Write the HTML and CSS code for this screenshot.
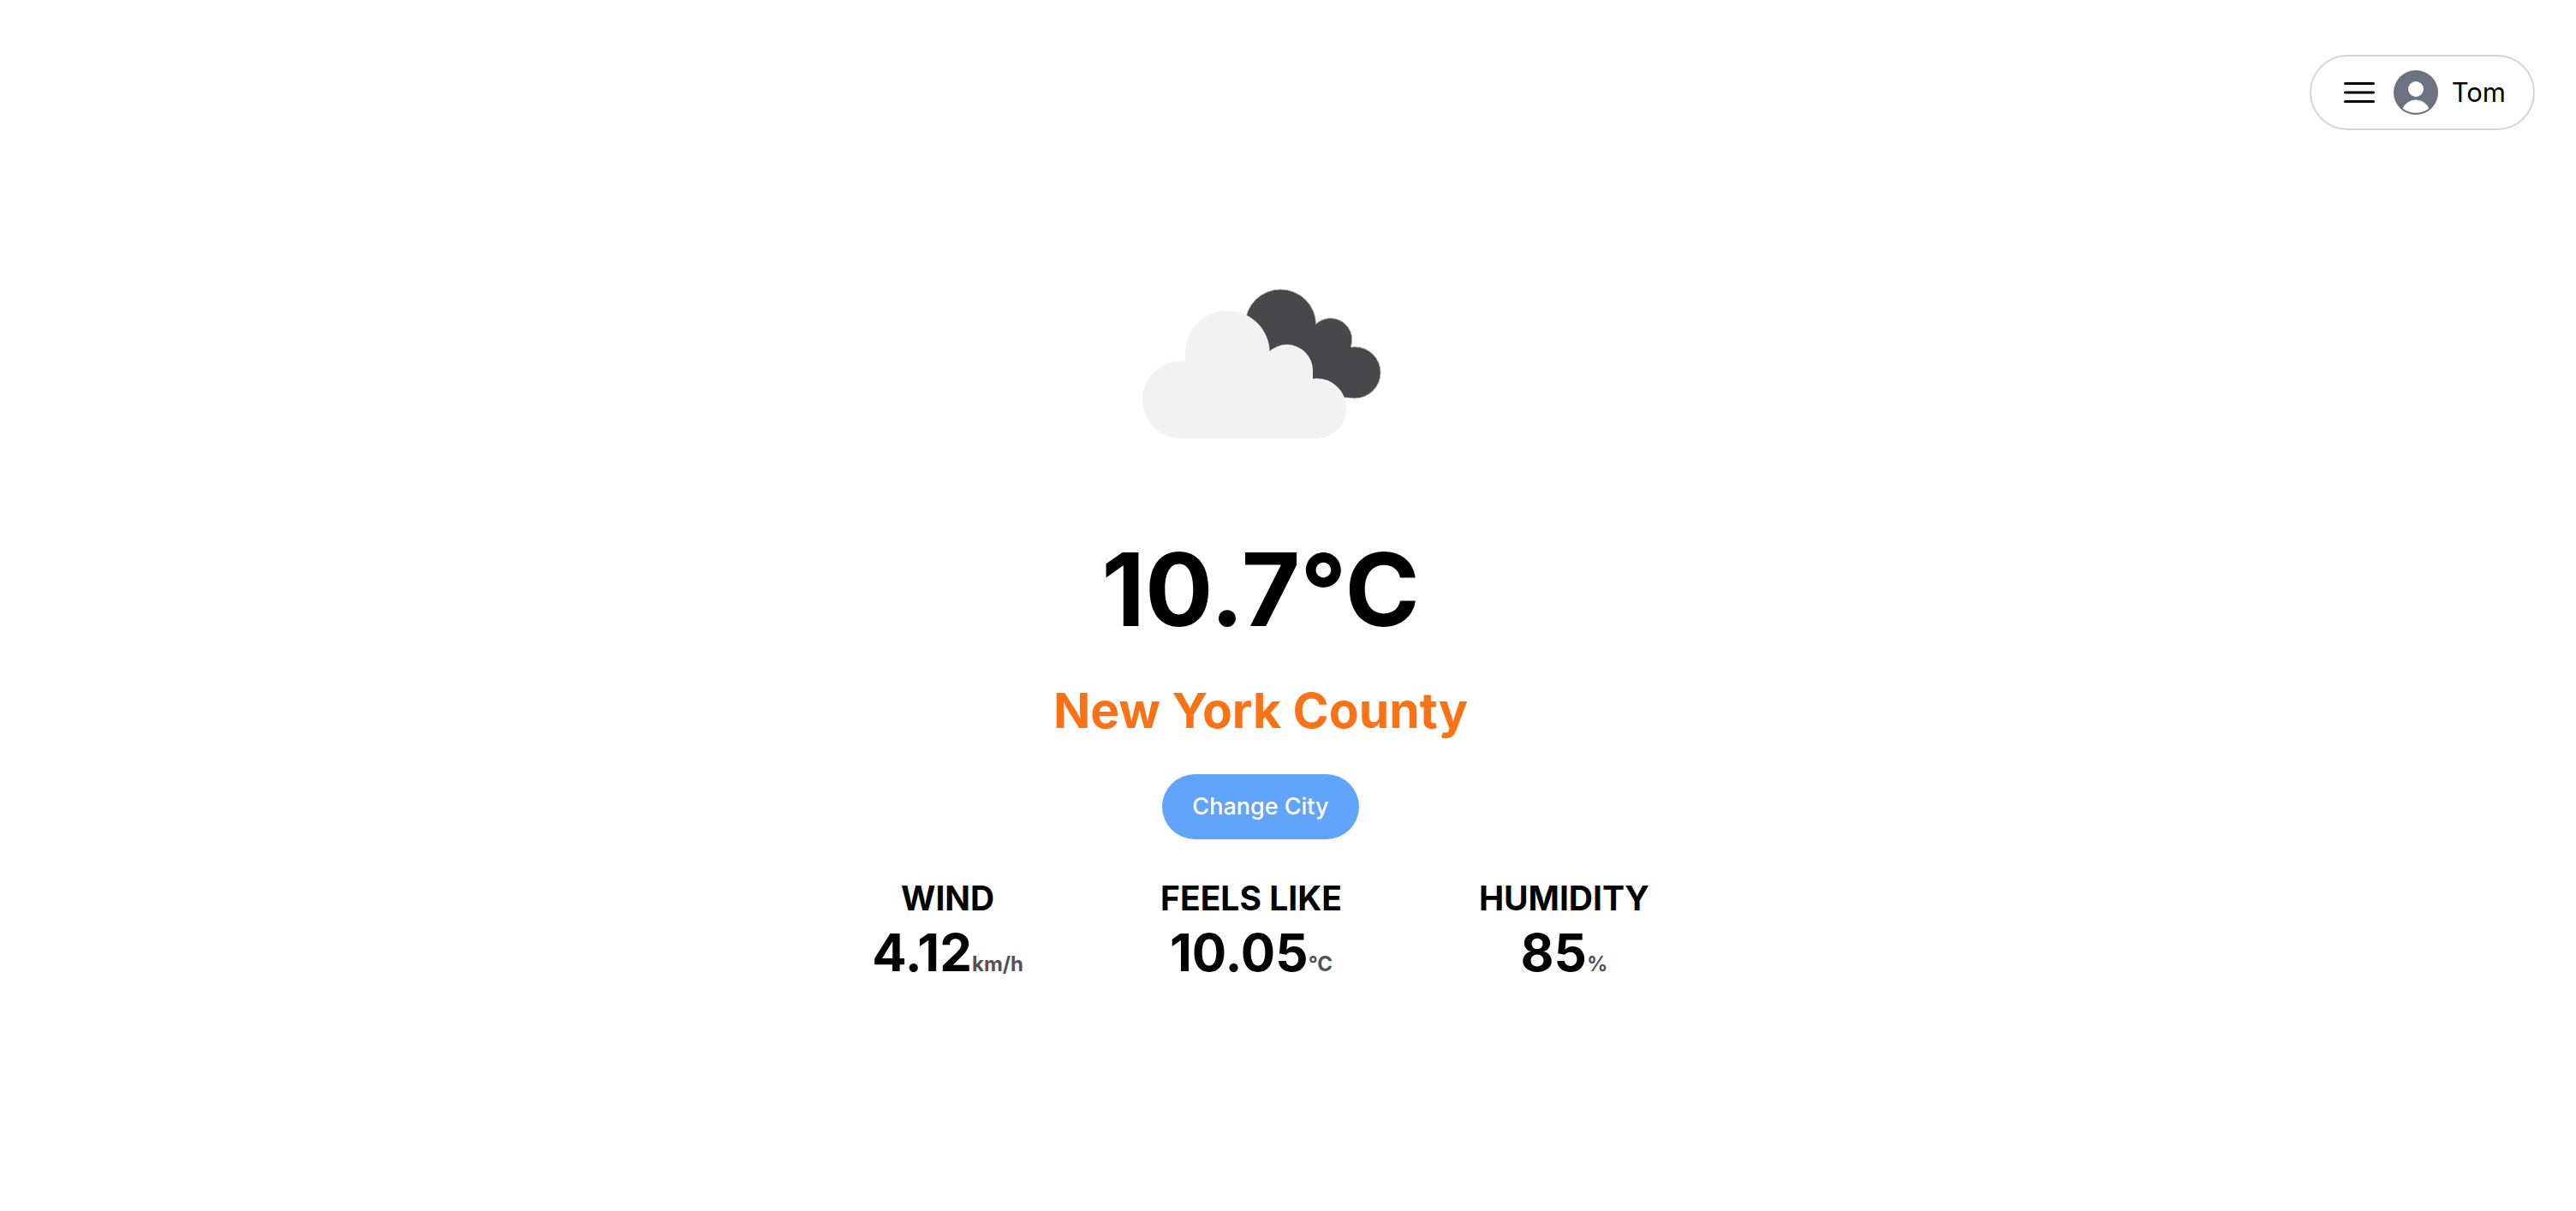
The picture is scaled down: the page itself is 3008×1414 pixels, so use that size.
FILE: index.html
```html
<!DOCTYPE html>
<html lang="en">
<head>
<meta charset="utf-8">
<title>Weather</title>
<link rel="stylesheet" href="styles.css">
</head>
<body>
<header class="topbar">
  <button class="user-menu" type="button">
    <svg class="menu-icon" viewBox="0 0 24 24" fill="none" stroke="currentColor" stroke-width="1.5" stroke-linecap="round" aria-hidden="true"><path d="M3.75 6.75h16.5M3.75 12h16.5M3.75 17.25h16.5"/></svg>
    <svg class="avatar" viewBox="0 0 52 52" aria-hidden="true">
      <path fill="currentColor" fill-rule="evenodd" d="M26 0a26 26 0 1 1 0 52a26 26 0 1 1 0-52ZM26 13a9 9 0 1 0 0 18a9 9 0 1 0 0-18ZM10.7 44.7A26 26 0 0 0 41.3 44.7A16.5 16.5 0 0 0 10.7 44.7Z"/>
    </svg>
    <span>Tom</span>
  </button>
</header>
<main class="weather">
  <svg class="cloud" viewBox="-9 0 930 630" role="img" aria-label="Broken clouds">
    <g fill="#48484a" stroke="#a9aaac" stroke-width="3">
      <circle cx="526" cy="178" r="124"/>
      <circle cx="701" cy="230" r="75"/>
      <circle cx="786" cy="345" r="90"/>
      <path stroke="none" d="M450 178H648L773 256L786 433H600L450 300Z"/>
      <circle stroke="none" cx="526" cy="178" r="122"/>
      <circle stroke="none" cx="701" cy="230" r="73"/>
      <circle stroke="none" cx="786" cy="345" r="88"/>
    </g>
    <g fill="#f2f2f2">
      <circle cx="177" cy="440" r="135"/>
      <circle cx="340" cy="276" r="148"/>
      <circle cx="548" cy="338" r="91"/>
      <circle cx="652" cy="470" r="105"/>
      <path d="M177 305H192V276H488L548 338H639V366L652 470V575H177Z"/>
    </g>
  </svg>
  <h1 class="temperature">10.7°C</h1>
  <h2 class="city">New York County</h2>
  <button class="change-city" type="button">Change City</button>
  <dl class="stats">
    <div class="stat"><dt>WIND</dt><dd>4.12<span class="unit">km/h</span></dd></div>
    <div class="stat"><dt>FEELS LIKE</dt><dd>10.05<span class="unit">°C</span></dd></div>
    <div class="stat"><dt>HUMIDITY</dt><dd>85<span class="unit">%</span></dd></div>
  </dl>
</main>
</body>
</html>
```
FILE: styles.css
```css
* {
  box-sizing: border-box;
  margin: 0;
}

body {
  background: #fff;
  color: #000;
  font-family: Inter, "Liberation Sans", sans-serif;
}

button {
  border: 0;
  font: inherit;
  cursor: pointer;
}

.topbar {
  display: flex;
  justify-content: flex-end;
  padding: 64px 48px 0;
}

.user-menu {
  display: flex;
  align-items: center;
  height: 88px;
  padding: 0 32px;
  border: 2px solid #d1d5db;
  border-radius: 44px;
  background: #fff;
  color: #000;
  font-size: 31px;
  line-height: 48px;
}

.menu-icon {
  width: 48px;
  height: 48px;
}

.avatar {
  width: 52px;
  height: 52px;
  margin: 0 16px;
  color: #6b7280;
}

.weather {
  display: flex;
  flex-direction: column;
  align-items: center;
  padding: 168px 64px 64px 0;
}

.cloud {
  width: 310px;
  height: 210px;
}

.temperature {
  margin-top: 98px;
  font-size: 118px;
  line-height: 120px;
}

.city {
  margin-top: 46px;
  color: #f97316;
  font-size: 57px;
  line-height: 72px;
}

.change-city {
  margin-top: 38px;
  padding: 18px 35px;
  border-radius: 38px;
  background: #60a5fa;
  color: #fff;
  font-size: 27px;
  font-weight: 500;
  line-height: 40px;
}

.stats {
  display: flex;
  gap: 160px;
  margin-top: 42px;
  font-weight: 700;
  text-align: center;
}

.stat dt {
  font-size: 39px;
  line-height: 54px;
}

.stat dd {
  font-size: 60px;
  line-height: 72px;
}

.unit {
  color: #52525b;
  font-size: 24px;
}
```
